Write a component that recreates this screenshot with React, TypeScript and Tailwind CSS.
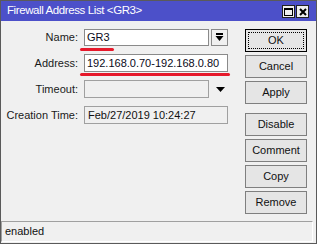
import React from "react";

// Winbox style dialog: "Firewall Address List <GR3>"
const font = "font-['Liberation_Sans',Arial,sans-serif]";

interface BtnProps {
  label: string;
  focused?: boolean;
  className?: string;
}

const DlgButton: React.FC<BtnProps> = ({ label, focused, className }) => (
  <button
    className={`w-[62px] h-[23px] text-[11px] text-[#111] leading-none flex items-center justify-center ${
      focused
        ? "border border-black bg-[#e5e5e5]"
        : "border border-[#7f7f7f] bg-[#e5e5e5]"
    } ${className ?? ""}`}
  >
    {focused ? (
      <span className="w-[56px] h-[17px] border border-dotted border-black flex items-center justify-center">
        {label}
      </span>
    ) : (
      label
    )}
  </button>
);

const Label: React.FC<{ text: string }> = ({ text }) => (
  <div className="w-[79px] text-right pr-[2px] text-[11px] text-[#1a1a1a] shrink-0">
    {text}
  </div>
);

const App: React.FC = () => {
  return (
    <div
      className={`w-[317px] h-[244px] bg-[#f0f0f0] border border-[#5a5a5a] flex flex-col overflow-hidden ${font}`}
    >
      {/* title bar */}
      <div className="h-[20px] bg-[#4c50c9] flex items-center pl-[6px] pr-[7px] shrink-0">
        <span className="text-white text-[11.5px] tracking-[-0.4px] flex-1">
          Firewall Address List &lt;GR3&gt;
        </span>
        <div className="flex gap-[1px] mt-[1px]">
          <div className="w-[13px] h-[13px] border border-[#222] bg-[#efefef] flex items-center justify-center">
            <div className="w-[9px] h-[8px] border border-black border-t-2" />
          </div>
          <div className="w-[13px] h-[13px] border border-[#222] bg-[#efefef] flex items-center justify-center">
            <svg width="8" height="8" viewBox="0 0 8 8">
              <path d="M1 1 L7 7 M7 1 L1 7" stroke="#000" strokeWidth="2" />
            </svg>
          </div>
        </div>
      </div>

      {/* body */}
      <div className="flex flex-1">
        <div className="w-[244px] pt-[8px] flex flex-col">
          {/* Name */}
          <div className="flex items-center h-[17px] relative">
            <Label text="Name:" />
            <div className="ml-[4px] w-[125px] h-[17px] bg-white border border-[#8a8a8a] text-[11px] text-[#0a0a20] pl-[2px] leading-[15px]">
              GR3
            </div>
            <div className="ml-[2px] w-[17px] h-[17px] border border-[#8a8a8a] bg-[#f0f0f0] flex items-center justify-center">
              <svg width="9" height="9" viewBox="0 0 9 9">
                <rect x="1" y="0" width="7" height="2" fill="#000" />
                <path d="M0.5 3 H8.5 L4.5 8 Z" fill="#000" />
              </svg>
            </div>
            <div className="absolute left-[79px] top-[19px] w-[34px] h-[3px] rounded-full bg-[#e6192b]" />
          </div>

          {/* Address */}
          <div className="flex items-center h-[18px] mt-[8px] relative">
            <Label text="Address:" />
            <div className="ml-[4px] w-[144px] h-[18px] bg-white border border-[#8a8a8a] text-[11px] text-[#0a0a20] pl-[2px] leading-[16px]">
              192.168.0.70-192.168.0.80
            </div>
            <div className="absolute left-[79px] top-[19px] w-[150px] h-[3px] rounded-full bg-[#e6192b]" />
          </div>

          {/* Timeout */}
          <div className="flex items-center h-[18px] mt-[8px]">
            <Label text="Timeout:" />
            <div className="ml-[4px] w-[125px] h-[18px] bg-[#f0f0f0] border border-[#a0a0a0]" />
            <svg width="9" height="5" viewBox="0 0 9 5" className="ml-[7px]">
              <path d="M0 0 H9 L4.5 5 Z" fill="#000" />
            </svg>
          </div>

          {/* Creation Time */}
          <div className="flex items-center h-[18px] mt-[8px]">
            <Label text="Creation Time:" />
            <div className="ml-[4px] w-[144px] h-[18px] bg-[#f0f0f0] border border-[#a0a0a0] text-[11px] text-[#111] pl-[3px] leading-[16px]">
              Feb/27/2019 10:24:27
            </div>
          </div>
        </div>

        {/* buttons */}
        <div className="pt-[8px] flex flex-col">
          <DlgButton label="OK" focused />
          <DlgButton label="Cancel" className="mt-[3px]" />
          <DlgButton label="Apply" className="mt-[3px]" />
          <DlgButton label="Disable" className="mt-[9px]" />
          <DlgButton label="Comment" className="mt-[3px]" />
          <DlgButton label="Copy" className="mt-[3px]" />
          <DlgButton label="Remove" className="mt-[3px]" />
        </div>
      </div>

      {/* status bar */}
      <div className="h-[22px] shrink-0 pr-[3px] pb-[1px]">
        <div className="h-full border-t border-l border-[#a0a0a0] border-r border-b border-r-white border-b-white text-[11px] text-[#111] pl-[3px] leading-[19px]">
          enabled
        </div>
      </div>
    </div>
  );
};

export default App;
